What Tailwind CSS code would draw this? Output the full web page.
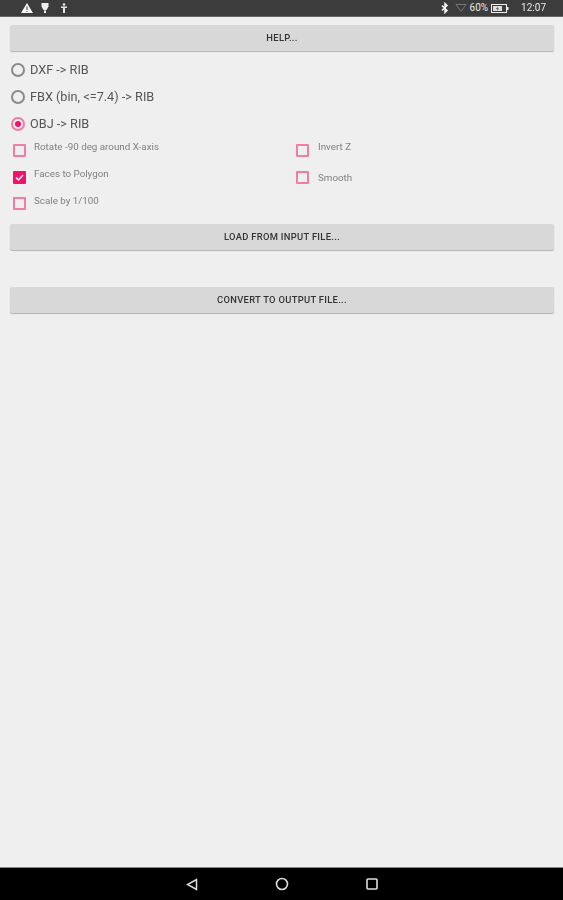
<!DOCTYPE html>
<html lang="en">
<head>
<meta charset="utf-8">
<title>RIB Converter</title>
<script src="https://cdn.jsdelivr.net/npm/@tailwindcss/browser@4"></script>
</head>
<body class="bg-[#efefef] font-['Roboto',sans-serif]">
  <div class="flex flex-col h-[900px] w-[563px] overflow-hidden blur-[0.4px]">

    <!-- Status bar -->
    <div class="h-[17px] bg-[#3c3c3c] flex items-center pl-[20px] pr-[17px] text-[#e8e8e8] border-b border-[#666]">
      <svg class="w-[14px] h-[12px]" viewBox="0 0 14 12"><path fill="#f5f5f5" d="M7 1l6 10H1z"/><path fill="#3c3c3c" d="M6.500 4.500h1v3.500h-1zM6.500 9h1v1h-1z"/></svg>
      <svg class="w-[10px] h-[12px] ml-[6px]" viewBox="0 0 10 12"><path fill="#f0f0f0" d="M1.500 1h7v3.500L6.500 8h-3L1.500 4.500z"/><path fill="#f0f0f0" d="M4 8.500h2V11H4z"/></svg>
      <svg class="w-[8px] h-[12px] ml-[10px]" viewBox="0 0 8 12"><circle cx="4" cy="2.500" r="1.300" fill="#e8e8e8"/><path fill="#e8e8e8" d="M1 4.500h6v1.500H5v5H3V6H1z"/></svg>
      <div class="ml-auto flex items-center">
        <svg class="w-[8px] h-[12px]" viewBox="0 0 8 12"><path fill="none" stroke="#f5f5f5" stroke-width="1.500" d="M1 3.500l5 5L4 10.500v-9l2 2-5 5"/></svg>
        <svg class="w-[12px] h-[10px] ml-[6px]" viewBox="0 0 12 10"><path fill="none" stroke="#777" d="M1 1.500h10L6 8.500z"/></svg>
        <span class="ml-[3px] text-[10px] leading-none">60%</span>
        <svg class="w-[18px] h-[9px] ml-[3px]" viewBox="0 0 18 9"><rect x="0.500" y="0.500" width="15" height="8" fill="none" stroke="#eee"/><rect x="16" y="3" width="1.500" height="3" fill="#eee"/><rect x="2" y="2" width="9" height="5" fill="#ddd"/><path fill="#3c3c3c" d="M7 2.500l-2 2.500h1.500l-.5 2 2-2.500H6.500z"/></svg>
        <span class="ml-[12px] text-[10px] leading-none">12:07</span>
      </div>
    </div>

    <!-- Main content -->
    <div class="flex-1 px-[10px] pt-[8px]">
      <button class="block w-[544px] h-[26px] bg-[#d7d8d7] rounded-[2px] shadow-[0_1px_1px_rgba(0,0,0,0.25)] text-[9.400px] font-medium text-[#333] uppercase tracking-[0.3px]">Help...</button>

      <div class="mt-[5px] text-[12.700px] text-[#555]">
        <div class="h-[27px] flex items-center pl-[1px]">
          <span class="w-[14px] h-[14px] rounded-full border-2 border-[#8a8a8a]"></span>
          <span class="ml-[5px]">DXF -&gt; RIB</span>
        </div>
        <div class="h-[27px] flex items-center pl-[1px]">
          <span class="w-[14px] h-[14px] rounded-full border-2 border-[#8a8a8a]"></span>
          <span class="ml-[5px]">FBX (bin, &lt;=7.4) -&gt; RIB</span>
        </div>
        <div class="h-[27px] flex items-center pl-[1px]">
          <span class="w-[14px] h-[14px] rounded-full border-2 border-[#f27ba8] flex items-center justify-center">
            <span class="w-[6px] h-[6px] rounded-full bg-[#f5106e]"></span>
          </span>
          <span class="ml-[5px]">OBJ -&gt; RIB</span>
        </div>
      </div>

      <div class="grid grid-cols-[283px_1fr] auto-rows-[27px] text-[9.800px] text-[#808080]">
        <div class="flex pl-[3px] pt-[7px]">
          <span class="w-[13px] h-[13px] border-2 border-[#f27ba8] rounded-[1px]"></span>
          <span class="ml-[8px] leading-[9px] mt-[-2px]">Rotate -90 deg around X-axis</span>
        </div>
        <div class="flex pl-[3px] pt-[7px]">
          <span class="w-[13px] h-[13px] border-2 border-[#f27ba8] rounded-[1px]"></span>
          <span class="ml-[9px] leading-[9px] mt-[-2px]">Invert Z</span>
        </div>
        <div class="flex pl-[3px] pt-[7px]">
          <span class="w-[13px] h-[13px] bg-[#f5106e] rounded-[1px] flex items-center justify-center">
            <svg class="w-[11px] h-[11px]" viewBox="0 0 11 11"><path fill="none" stroke="#fff" stroke-width="1.500" d="M2 5.500l2.500 2.500L9 3"/></svg>
          </span>
          <span class="ml-[8px] leading-[9px] mt-[-2px]">Faces to Polygon</span>
        </div>
        <div class="flex items-start pl-[3px] pt-[7px]">
          <span class="w-[13px] h-[13px] border-2 border-[#f27ba8] rounded-[1px]"></span>
          <span class="ml-[9px] leading-[13px]">Smooth</span>
        </div>
        <div class="flex pl-[3px] pt-[6px] col-start-1">
          <span class="w-[13px] h-[13px] border-2 border-[#f27ba8] rounded-[1px]"></span>
          <span class="ml-[8px] leading-[9px] mt-[-1px]">Scale by 1/100</span>
        </div>
      </div>

      <button class="mt-[6px] block w-[544px] h-[26px] bg-[#d7d8d7] rounded-[2px] shadow-[0_1px_1px_rgba(0,0,0,0.25)] text-[9.400px] font-medium text-[#333] uppercase tracking-[0.3px]">Load from input file...</button>
      <button class="mt-[37px] block w-[544px] h-[26px] bg-[#d7d8d7] rounded-[2px] shadow-[0_1px_1px_rgba(0,0,0,0.25)] text-[9.400px] font-medium text-[#333] uppercase tracking-[0.3px]">Convert to output file...</button>
    </div>

    <!-- Navigation bar -->
    <div class="h-[33px] bg-black border-t border-[#888] box-border grid grid-cols-[186px_12px_77px_14px_77px_12px] items-center">
      <svg class="col-start-2 w-[12px] h-[13px]" viewBox="0 0 12 13"><path fill="none" stroke="#ddd" stroke-width="1.500" d="M10.500 1.500v10L1.500 6.500z"/></svg>
      <svg class="col-start-4 w-[14px] h-[14px]" viewBox="0 0 14 14"><circle cx="7" cy="7" r="5.500" fill="none" stroke="#ddd" stroke-width="1.600"/></svg>
      <svg class="col-start-6 w-[12px] h-[12px]" viewBox="0 0 12 12"><rect x="1" y="1" width="10" height="10" rx="1" fill="none" stroke="#ddd" stroke-width="1.600"/></svg>
    </div>
  </div>
</body>
</html>
